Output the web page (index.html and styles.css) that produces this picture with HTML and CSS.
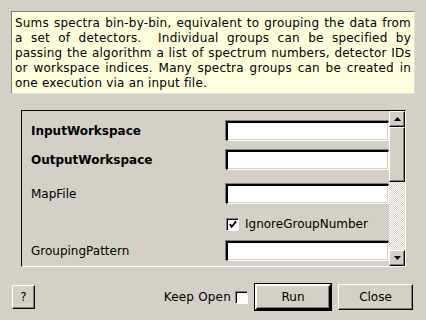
FILE: index.html
```html
<!DOCTYPE html>
<html>
<head>
<meta charset="utf-8">
<link rel="stylesheet" href="styles.css">
</head>
<body>
<div class="dialog">
  <div class="desc">Sums spectra bin-by-bin, equivalent to grouping the data from a set of detectors.&nbsp; Individual groups can be specified by passing the algorithm a list of spectrum numbers, detector IDs or workspace indices. Many spectra groups can be created in one execution via an input file.</div>
  <div class="panel">
    <div class="props">
      <div class="row r1"><span class="label bold">InputWorkspace</span><span class="field"></span></div>
      <div class="row r2"><span class="label bold">OutputWorkspace</span><span class="field"></span></div>
      <div class="row r3"><span class="label">MapFile</span><span class="field"></span></div>
      <div class="row r4"><span class="label"></span><span class="check-wrap"><span class="check"><svg width="11" height="11" viewBox="0 0 11 11"><path d="M2 5 L4 8 L9 2" fill="none" stroke="#000" stroke-width="2"/></svg></span><span class="check-label">IgnoreGroupNumber</span></span></div>
      <div class="row r5"><span class="label">GroupingPattern</span><span class="field"></span></div>
    </div>
    <div class="scrollbar">
      <div class="sb-btn"><svg width="7" height="4" viewBox="0 0 7 4"><path d="M3.5 0 L7 4 L0 4 Z" fill="#000"/></svg></div>
      <div class="sb-thumb"></div>
      <div class="sb-track"></div>
      <div class="sb-btn"><svg width="7" height="4" viewBox="0 0 7 4"><path d="M0 0 L7 0 L3.5 4 Z" fill="#000"/></svg></div>
    </div>
  </div>
  <div class="footer">
    <button class="btn help">?</button>
    <span class="spacer"></span>
    <span class="keep">Keep Open</span>
    <span class="check small"></span>
    <button class="btn run">Run</button>
    <button class="btn close">Close</button>
  </div>
</div>
</body>
</html>
```

FILE: styles.css
```css
html, body {
  margin: 0;
  padding: 0;
  background: #d4d0c8;
}
body {
  width: 426px;
  height: 320px;
  overflow: hidden;
  font-family: "DejaVu Sans", sans-serif;
  font-size: 12px;
  color: #000;
}
.dialog {
  display: flex;
  flex-direction: column;
  padding-top: 11px;
}
.desc {
  margin-left: 11px;
  width: 396px;
  height: 76px;
  padding: 4px 3px 1px 3px;
  background: #ffffdc;
  border: 1px solid #808080;
  border-right-color: #e0e0e0;
  border-bottom-color: #e0e0e0;
  line-height: 15px;
  text-align: justify;
  letter-spacing: 0.2px;
}
.panel {
  margin-top: 16px;
  margin-left: 21px;
  width: 383px;
  height: 155px;
  border: 1px solid #000;
  border-right-color: #fff;
  border-bottom-color: #fff;
  display: flex;
  overflow: hidden;
}
.props {
  flex: 1;
  display: flex;
  flex-direction: column;
  padding-left: 9px;
}
.row {
  display: flex;
  align-items: center;
  height: 20px;
}
.r1 { margin-top: 10px; }
.r2 { margin-top: 9px; }
.r3 { margin-top: 14px; }
.r4 { margin-top: 10px; }
.r5 { margin-top: 7px; }
.label {
  width: 195px;
  flex: none;
}
.bold { font-weight: bold; }
.field {
  flex: 1;
  height: 20px;
  box-sizing: border-box;
  background: #fff;
  border-top: 2px solid #000;
  border-left: 2px solid #000;
  border-bottom: 1px solid #fff;
  border-right: 1px solid #fff;
  box-shadow: inset -1px -1px 0 #d4d0c8, -1px -1px 0 #808080;
}
.check-wrap {
  display: flex;
  align-items: center;
}
.check {
  width: 13px;
  height: 13px;
  box-sizing: border-box;
  background: #fff;
  border-top: 1px solid #808080;
  border-left: 1px solid #808080;
  border-bottom: 1px solid #fff;
  border-right: 1px solid #fff;
  box-shadow: inset 1px 1px 0 #000;
  display: flex;
  align-items: center;
  justify-content: center;
}
.check svg { margin: 1px 0 0 1px; }
.check-label { margin-left: 6px; }
.scrollbar {
  width: 16px;
  flex: none;
  display: flex;
  flex-direction: column;
}
.sb-btn, .sb-thumb {
  box-sizing: border-box;
  background: #d4d0c8;
  border-top: 1px solid #fff;
  border-left: 1px solid #fff;
  border-bottom: 1px solid #000;
  border-right: 1px solid #000;
  box-shadow: inset -1px -1px 0 #808080;
}
.sb-btn {
  height: 16px;
  display: flex;
  align-items: center;
  justify-content: center;
}
.sb-thumb { height: 55px; }
.sb-track {
  flex: 1;
  background: repeating-conic-gradient(#fff 0 25%, #d4d0c8 0 50%) 0 0 / 2px 2px;
}
.footer {
  display: flex;
  align-items: center;
  margin-top: 16px;
  padding: 0 13px 0 12px;
  height: 28px;
}
.spacer { flex: 1; }
.btn {
  font-family: "DejaVu Sans", sans-serif;
  font-size: 12px;
  color: #000;
  background: #d4d0c8;
  border-top: 1px solid #fff;
  border-left: 1px solid #fff;
  border-bottom: 1px solid #000;
  border-right: 1px solid #000;
  box-shadow: inset -1px -1px 0 #808080;
  padding: 0;
  margin: 0;
  box-sizing: border-box;
}
.help { width: 23px; height: 24px; }
.keep { margin-right: 4px; letter-spacing: 0.2px; }
.check.small { width: 13px; height: 13px; margin-right: 6px; }
.run {
  border: 2px solid #000;
  border-top-color: #fff;
  border-left-color: #fff;
  box-shadow: inset -1px -1px 0 #808080, 0 0 0 1px #000;
  width: 76px;
  height: 26px;
  margin: 0 1px;
}
.close {
  width: 75px;
  height: 26px;
  margin-left: 6px;
}
```
